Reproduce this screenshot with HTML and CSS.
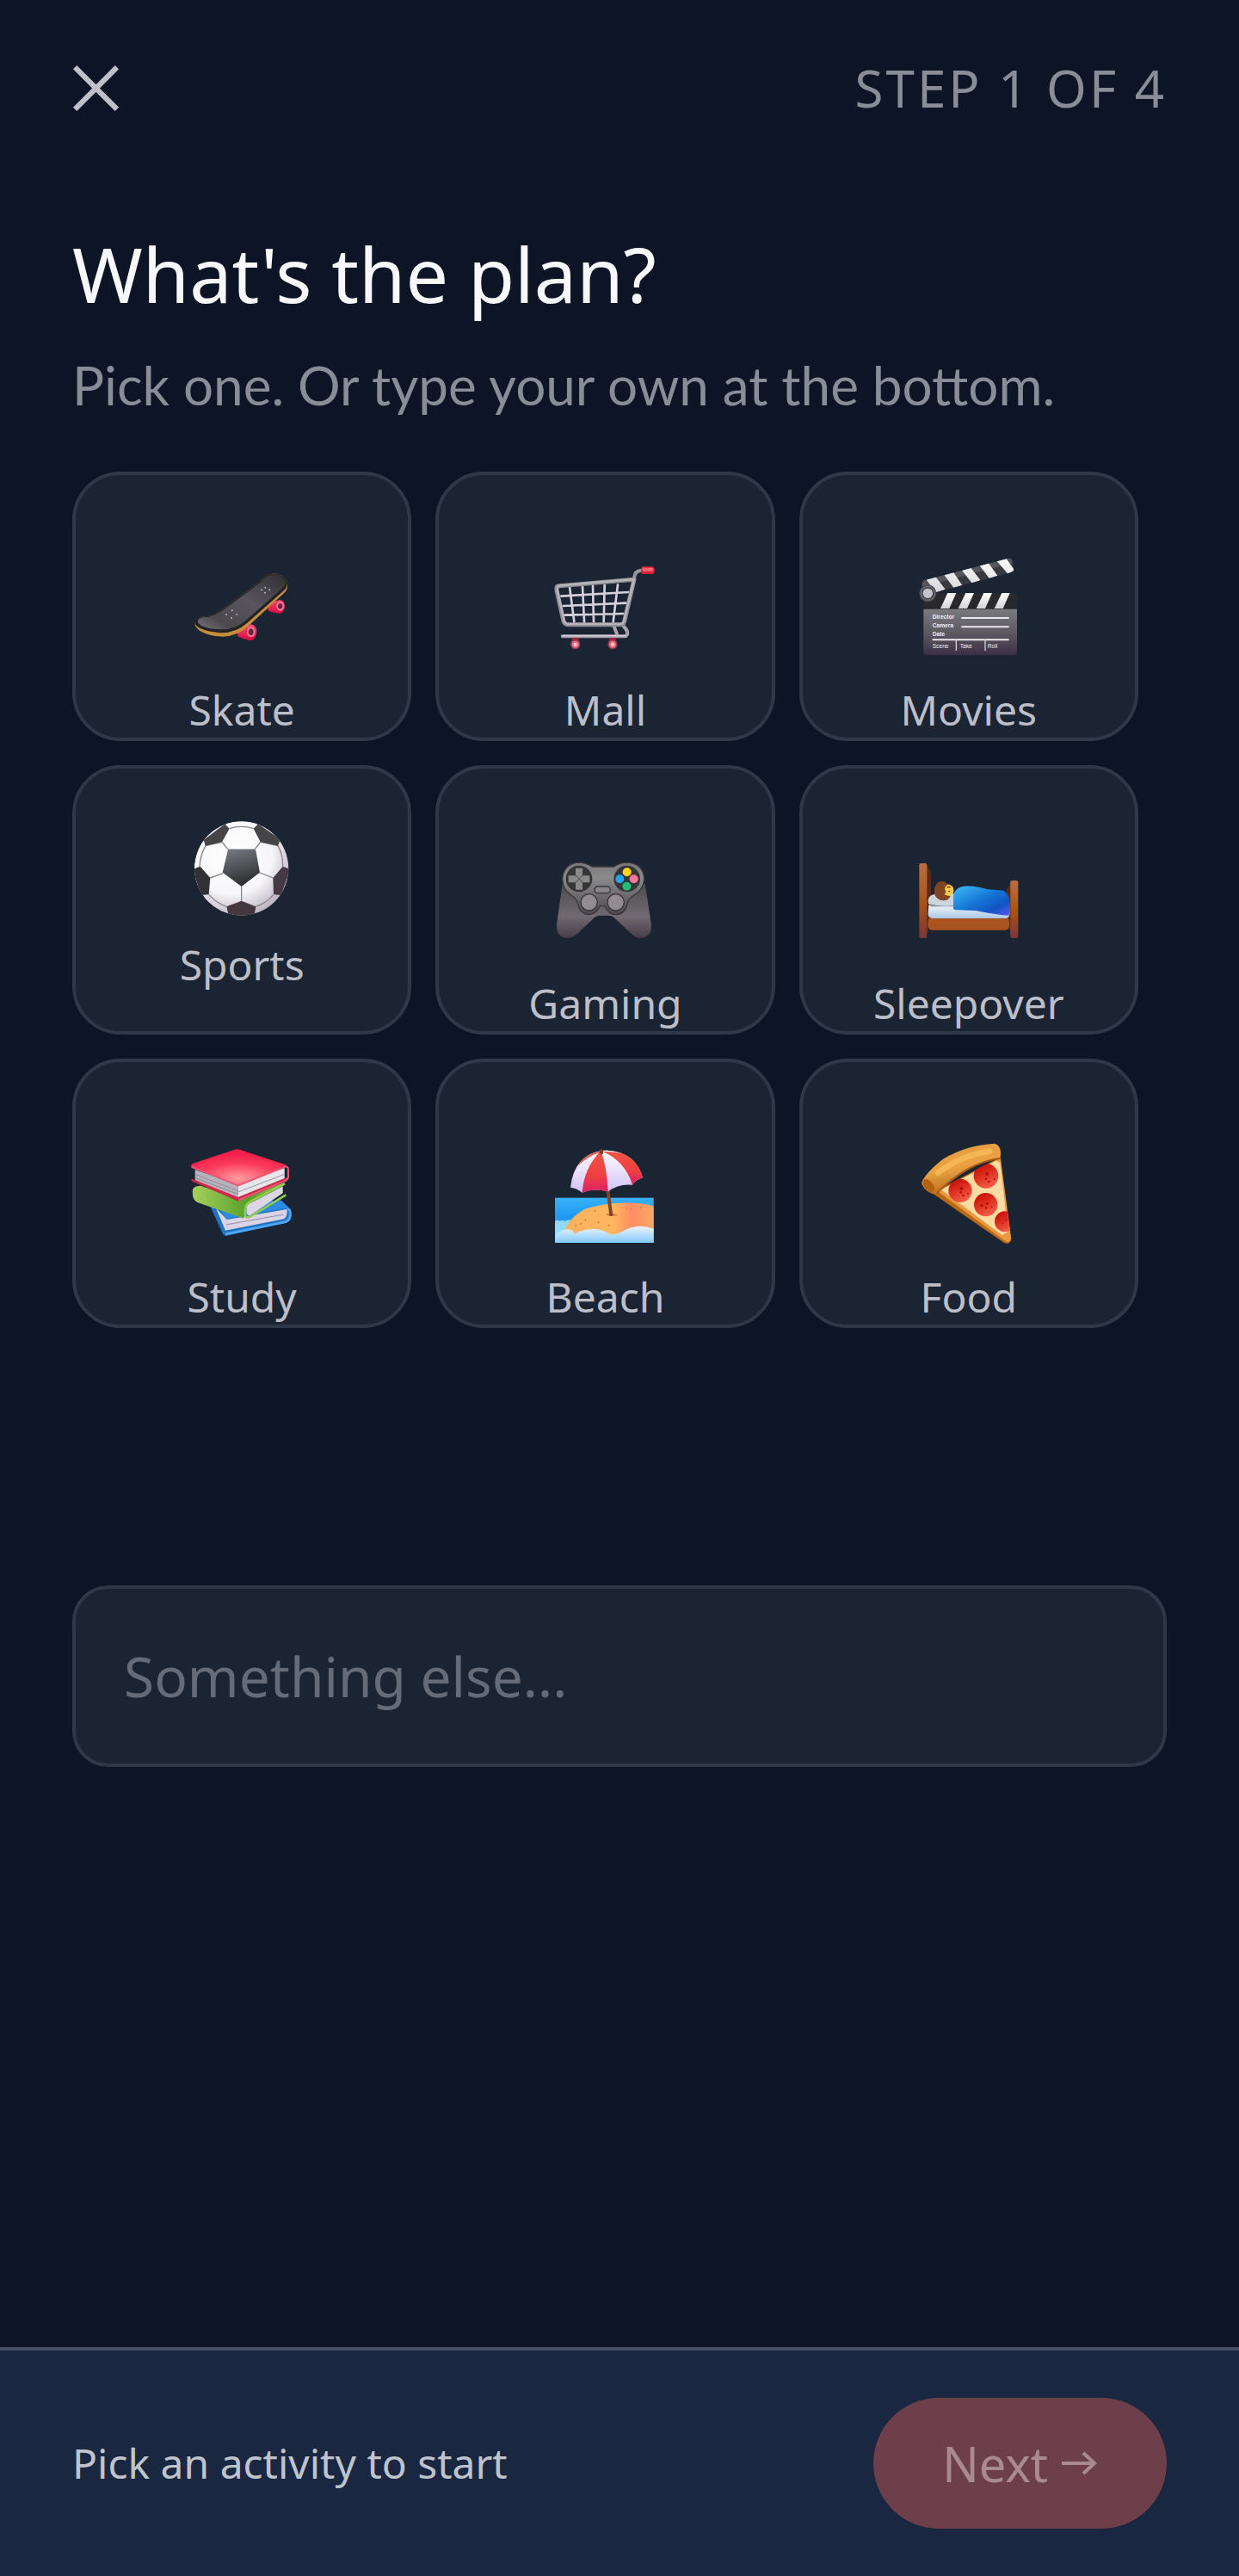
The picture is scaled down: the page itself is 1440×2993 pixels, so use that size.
FILE: index.html
```html
<!DOCTYPE html>
<html lang="en">
<head>
  <meta charset="UTF-8">
  <meta name="viewport" content="width=device-width, initial-scale=1.0">
  <title>What's the plan?</title>
  <link rel="stylesheet" href="styles.css">
</head>
<body>
  <header class="topbar">
    <button class="close-btn" type="button" aria-label="Close">
      <svg class="close-icon" viewBox="0 0 52 52" aria-hidden="true">
        <path d="M3 3L50 50M50 3L3 50" fill="none" stroke="currentColor" stroke-width="6"/>
      </svg>
    </button>
    <span class="step">STEP 1 OF 4</span>
  </header>

  <main class="content">
    <h1 class="title">What's the plan?</h1>
    <p class="subtitle">Pick one. Or type your own at the bottom.</p>

    <div class="activity-grid">
      <button class="activity" type="button">
        <svg class="emoji" viewBox="453 345 360 360" aria-hidden="true">
          <defs>
            <linearGradient id="deck" x1="0" y1="1" x2="1" y2="0">
              <stop offset="0" stop-color="#77757b"/>
              <stop offset=".2" stop-color="#4b494d"/>
              <stop offset=".55" stop-color="#57545f"/>
              <stop offset="1" stop-color="#313033"/>
            </linearGradient>
            <linearGradient id="wheel" x1="0" y1="0" x2="0" y2="1">
              <stop offset="0" stop-color="#f84d72"/>
              <stop offset="1" stop-color="#d40a3c"/>
            </linearGradient>
          </defs>
          <path d="M724 528Q740 504 766 501Q784 504 783 526Q780 548 764 549Q738 546 724 538Z" fill="url(#wheel)"/>
          <path d="M618 618Q640 588 664 586Q686 590 685 614Q680 642 662 643Q636 638 618 627Z" fill="url(#wheel)"/>
          <ellipse cx="767" cy="523" rx="13" ry="16" fill="#ff8095"/>
          <ellipse cx="767" cy="523" rx="8" ry="10" fill="#6a2740"/>
          <ellipse cx="665" cy="613" rx="14" ry="18" fill="#ff8095"/>
          <ellipse cx="665" cy="613" rx="9" ry="12" fill="#6a2740"/>
          <path d="M470 580Q475 560 510 558Q532 558 568 532L700 434Q716 412 744 409Q776 409 790 434Q798 462 780 478L660 588Q620 628 566 629Q488 624 470 590Z" fill="#c78e38"/>
          <path d="M470 578Q475 560 510 558Q532 558 568 532L700 434Q716 412 744 409Q776 409 790 434Q797 454 776 472L654 580Q614 616 562 616Q486 610 470 586Z" fill="#232326"/>
          <path d="M480 573Q484 562 512 561Q534 560 572 534L702 438Q718 416 744 412Q770 411 784 434Q789 450 770 464L648 572Q612 604 562 604Q494 602 480 580Z" fill="url(#deck)"/>
          <g fill="#b8b6ba">
            <circle cx="715" cy="458" r="3"/><circle cx="702" cy="466" r="3"/><circle cx="729" cy="466" r="3"/><circle cx="714" cy="476" r="3"/>
            <circle cx="599" cy="538" r="3"/><circle cx="579" cy="552" r="3"/><circle cx="616" cy="551" r="3"/><circle cx="597" cy="564" r="3"/>
          </g>
        </svg>
        <span class="activity-label">Skate</span>
      </button>

      <button class="activity" type="button">
        <svg class="emoji" viewBox="460 345 360 360" aria-hidden="true">
          <defs>
            <linearGradient id="frame" x1="0" y1="0" x2="0" y2="1">
              <stop offset="0" stop-color="#b4b5ba"/>
              <stop offset="1" stop-color="#b9b1bf"/>
            </linearGradient>
          </defs>
          <g fill="none" stroke-linecap="round" stroke-linejoin="round">
            <path d="M672 594L682 620M706 594Q728 616 712 628L492 628" stroke="#aaa4b2" stroke-width="12"/>
            <path d="M494 626L712 626" stroke="#d9d2df" stroke-width="4"/>
            <path d="M517 456L533 578M562 454L568 578M598 452L601 578M639 450L636 578M685 448L669 578M488 488L722 474M494 522L714 512M500 554L704 549" stroke="#d5d1dc" stroke-width="8"/>
            <path d="M742 426Q744 398 768 398" stroke="#96999e" stroke-width="12"/>
            <path d="M476 453Q470 454 472 468L496 576Q500 587 510 587L696 587Q706 586 708 576L742 430Z" stroke="#8d8d94" stroke-width="15"/>
            <path d="M480 451L742 429L706 576Q704 584 696 585L510 585Q502 584 498 574L474 466Q474 454 480 451Z" stroke="url(#frame)" stroke-width="8"/>
          </g>
          <rect x="766" y="385" width="47" height="26" rx="10" fill="#d92338"/>
          <rect x="770" y="389" width="39" height="12" rx="6" fill="#ff6473"/>
          <path d="M526 634h22l4 20h-30ZM656 634h22l4 20h-30Z" fill="#a81c33"/>
          <circle cx="537" cy="656" r="17" fill="#943d50"/><circle cx="537" cy="656" r="12" fill="#f36d85"/><circle cx="537" cy="656" r="6" fill="#ffd0d4"/>
          <circle cx="667" cy="656" r="17" fill="#943d50"/><circle cx="667" cy="656" r="12" fill="#f36d85"/><circle cx="667" cy="656" r="6" fill="#ffd0d4"/>
        </svg>
        <span class="activity-label">Mall</span>
      </button>

      <button class="activity" type="button">
        <svg class="emoji" viewBox="468 345 360 360" aria-hidden="true">
          <defs>
            <linearGradient id="slate" x1="0" y1="0" x2="0" y2="1">
              <stop offset="0" stop-color="#7a7a7e"/>
              <stop offset=".5" stop-color="#5d5a62"/>
              <stop offset="1" stop-color="#3c2f45"/>
            </linearGradient>
            <linearGradient id="stripe" x1="0" y1="0" x2="0" y2="1">
              <stop offset="0" stop-color="#fff"/>
              <stop offset="1" stop-color="#d4d3d8"/>
            </linearGradient>
            <clipPath id="arm"><path d="M496 432L786 356Q796 354 799 364L804 392Q805 402 796 405L520 478L484 450Q483 436 496 432Z"/></clipPath>
          </defs>
          <g clip-path="url(#arm)">
            <path d="M470 350h350v140H470Z" fill="#38383e"/>
            <path d="M470 438L800 352L803 372L478 458Z" fill="#55555e"/>
            <path d="M500 430L532 420L566 464L532 476ZM562 414L594 404L625 450L596 460ZM624 398L654 388L688 432L660 444ZM686 382L716 372L748 416L720 427ZM746 366L778 356L808 398L784 410Z" fill="url(#stripe)"/>
          </g>
          <path d="M490 478h316q10 0 10 10v46H490Z" fill="#28282d"/>
          <path d="M574 477h30l-24 54h-31ZM637 477h29l-24 54h-31ZM700 477h29l-24 54h-31ZM763 477h28l-24 54h-30Z" fill="url(#stripe)"/>
          <path d="M490 533h326v148q0 13-12 13H502q-12 0-12-13Z" fill="url(#slate)"/>
          <path d="M622 564h166M622 595h166M521 640h267" stroke="#e9e8ec" stroke-width="6"/>
          <path d="M604 640v38M705 640v38" stroke="#d2ced8" stroke-width="4"/>
          <g class="slate-text" fill="#efeef2">
            <text x="521" y="566" font-weight="bold">Director</text>
            <text x="521" y="596" font-weight="bold">Camera</text>
            <text x="521" y="626" font-weight="bold">Date</text>
            <text x="521" y="668">Scene</text>
            <text x="617" y="668">Take</text>
            <text x="713" y="668">Roll</text>
          </g>
          <circle cx="505" cy="478" r="30" fill="#4b4b51"/>
          <circle cx="505" cy="478" r="24" fill="none" stroke="#77777d" stroke-width="3"/>
          <circle cx="505" cy="478" r="17" fill="#c4c4ca"/>
        </svg>
        <span class="activity-label">Movies</span>
      </button>

      <button class="activity activity-compact" type="button">
        <svg class="emoji" viewBox="453 237 360 360" aria-hidden="true">
          <defs>
            <radialGradient id="ball" cx=".4" cy=".35" r=".7">
              <stop offset="0" stop-color="#fff"/>
              <stop offset=".6" stop-color="#f7f7f9"/>
              <stop offset="1" stop-color="#b7adbd"/>
            </radialGradient>
            <linearGradient id="patch" x1=".2" y1="0" x2=".5" y2="1">
              <stop offset="0" stop-color="#747980"/>
              <stop offset="1" stop-color="#2b2b2d"/>
            </linearGradient>
            <clipPath id="ball-clip"><circle cx="632" cy="417" r="164"/></clipPath>
          </defs>
          <g clip-path="url(#ball-clip)">
            <circle cx="632" cy="417" r="165" fill="url(#ball)"/>
            <g fill="none" stroke="#88868c" stroke-width="4">
              <path d="M586 352L564 325L507 338Q488 370 486 410M586 352L677 352L698 325L759 338Q777 370 776 410M567 434L523 450M695 432L742 450M632 480V530M590 278Q630 264 674 278M518 508Q544 538 580 550M744 508Q720 538 682 550"/>
            </g>
            <path d="M590 350h86q5 0 6 5l14 76-64 49-66-49 18-76q1-5 6-5Z" fill="url(#patch)"/>
            <path d="M506 338Q503 326 500 318L574 262L590 278L564 325ZM674 278L690 262L768 316L759 338L698 325Z" fill="#454548"/>
            <path d="M462 420L488 410L523 450L518 508L490 510Z" fill="#323235"/>
            <path d="M776 410L802 420L770 510L744 508L742 450Z" fill="#453945"/>
            <path d="M580 550L632 530L682 550L676 585H588Z" fill="#45373f"/>
          </g>
        </svg>
        <span class="activity-label">Sports</span>
      </button>

      <button class="activity" type="button">
        <svg class="emoji" viewBox="460 348 360 360" aria-hidden="true">
          <defs>
            <linearGradient id="pad" x1="0" y1="0" x2="0" y2="1">
              <stop offset="0" stop-color="#79797b"/>
              <stop offset=".3" stop-color="#8a8a8b"/>
              <stop offset="1" stop-color="#4e494e"/>
            </linearGradient>
            <linearGradient id="grip" x1="0" y1="0" x2="0" y2="1">
              <stop offset="0" stop-color="#4d4b4f"/>
              <stop offset=".6" stop-color="#716a72"/>
              <stop offset="1" stop-color="#453c48"/>
            </linearGradient>
          </defs>
          <path d="M492 470L472 614Q470 654 506 660Q528 660 544 644L604 588Q612 581 624 581H652Q664 581 672 588L732 644Q746 660 768 660Q804 652 802 614L780 470Z" fill="url(#grip)"/>
          <path d="M548 396Q574 396 596 411H672Q692 396 718 396Q776 400 777 456Q774 492 742 510Q722 522 718 540Q710 577 678 578Q652 577 640 548H622Q610 576 586 578Q552 576 546 540Q542 522 522 510Q492 490 492 454Q496 400 548 396Z" fill="url(#pad)" stroke="#38353a" stroke-width="4"/>
          <circle cx="550" cy="453" r="46" fill="#353537"/>
          <circle cx="717" cy="453" r="46" fill="#353537"/>
          <path d="M538 416h24v24l-12 13-12-13ZM538 491h24v-24l-12-12-12 12ZM513 442h24l12 12-12 12h-24ZM587 442h-24l-12 12 12 12h24Z" fill="#898989"/>
          <circle cx="717" cy="430" r="15" fill="#ffd41c"/>
          <circle cx="692" cy="454" r="15" fill="#25a3ea"/>
          <circle cx="741" cy="454" r="15" fill="#f9759a"/>
          <circle cx="716" cy="479" r="15" fill="#22bd78"/>
          <rect x="604" y="480" width="55" height="23" rx="11" fill="#858486" stroke="#373639" stroke-width="4"/>
          <circle cx="585" cy="535" r="29" fill="#928c92" stroke="#373338" stroke-width="4"/>
          <circle cx="678" cy="535" r="29" fill="#928c92" stroke="#373338" stroke-width="4"/>
        </svg>
        <span class="activity-label">Gaming</span>
      </button>

      <button class="activity" type="button">
        <svg class="emoji" viewBox="468 348 360 360" aria-hidden="true">
          <defs>
            <linearGradient id="post" x1="0" y1="0" x2="0" y2="1">
              <stop offset="0" stop-color="#b96e41"/>
              <stop offset=".55" stop-color="#a95218"/>
              <stop offset="1" stop-color="#7b3438"/>
            </linearGradient>
            <linearGradient id="blanket" x1="0" y1="0" x2="1" y2="1">
              <stop offset="0" stop-color="#3fbbf7"/>
              <stop offset=".45" stop-color="#1679d8"/>
              <stop offset=".75" stop-color="#1054c4"/>
              <stop offset="1" stop-color="#5a58ed"/>
            </linearGradient>
            <linearGradient id="sheet" x1="0" y1="0" x2="0" y2="1">
              <stop offset="0" stop-color="#f0f3f6"/>
              <stop offset="1" stop-color="#a9c8e8"/>
            </linearGradient>
          </defs>
          <path d="M500 402L516 430V590L500 655ZM796 462L780 490V590L796 655Z" fill="#5a2c16"/>
          <rect x="506" y="588" width="283" height="44" rx="14" fill="#a9541f"/>
          <path d="M508 546H790V580Q788 591 776 591H520Q506 590 506 576Z" fill="url(#sheet)"/>
          <path d="M506 528Q508 508 532 506L600 505V548H520Q506 548 506 528Z" fill="#ccd5dc"/>
          <path d="M508 540Q552 552 600 546V550H516Z" fill="#7890a0"/>
          <path d="M560 474Q588 468 594 486Q600 506 578 516L560 510Z" fill="#fcca4e"/>
          <path d="M572 484q7-5 12 0M576 496q4 2 6 0" fill="none" stroke="#7a4318" stroke-width="4"/>
          <path d="M532 478Q538 462 554 462Q568 462 574 474Q562 480 565 492Q572 500 562 508Q574 512 584 514Q578 530 558 529Q536 527 528 506Q526 488 532 478Z" fill="#814523"/>
          <path d="M594 558V512Q598 484 630 479Q670 476 714 490L770 494Q790 508 792 540L788 581L760 579Q710 572 670 564L606 562Q596 562 594 558Z" fill="url(#blanket)"/>
          <rect x="475" y="399" width="27" height="261" rx="7" fill="url(#post)"/>
          <rect x="793" y="459" width="27" height="201" rx="7" fill="url(#post)"/>
        </svg>
        <span class="activity-label">Sleepover</span>
      </button>

      <button class="activity" type="button">
        <svg class="emoji" viewBox="453 348 360 360" aria-hidden="true">
          <defs>
            <radialGradient id="red-cover" cx=".5" cy=".8" r=".7">
              <stop offset="0" stop-color="#ff9c9f"/>
              <stop offset=".6" stop-color="#fb3a5e"/>
              <stop offset="1" stop-color="#f51d49"/>
            </radialGradient>
            <linearGradient id="green-cover" x1="0" y1="0" x2="1" y2="0">
              <stop offset="0" stop-color="#a8cf5c"/>
              <stop offset=".6" stop-color="#55a129"/>
              <stop offset="1" stop-color="#8cc548"/>
            </linearGradient>
          </defs>
          <path d="M522 570L770 550L800 580Q810 612 792 628L576 675L568 670Z" fill="#1e73c4"/>
          <path d="M544 580L576 656L780 616Q794 606 790 582L582 618Z" fill="#dcd3e5"/>
          <path d="M578 636L780 600" stroke="#968fa8" stroke-width="3"/>
          <path d="M522 572L770 552L796 576L578 616L560 582Z" fill="#2c8be2"/>
          <path d="M576 669L786 626Q804 618 802 594Q800 580 790 582" fill="none" stroke="#4fa6f3" stroke-width="9"/>
          <path d="M462 512Q468 500 490 500L620 545L780 490L786 496L654 564Q640 574 640 614L478 558Q458 548 462 512Z" fill="url(#green-cover)"/>
          <path d="M650 574Q652 564 664 560L776 502V526L664 602Q650 606 650 592Z" fill="#ded6e4"/>
          <path d="M782 492L662 556Q645 564 645 586V604Q650 614 662 608L787 532" fill="none" stroke="#93cc51" stroke-width="8"/>
          <path d="M456 476L620 530L790 470V485L620 554L458 484Z" fill="#cf2848"/>
          <path d="M470 444L620 496V540L470 480Z" fill="#b7b3bd"/>
          <path d="M470 460L620 518M470 472L620 530" stroke="#8d8895" stroke-width="3"/>
          <path d="M620 496L782 438V474L620 540Z" fill="#e8e5eb"/>
          <path d="M620 522L782 460" stroke="#9c97a5" stroke-width="3"/>
          <path d="M456 430Q456 424 464 422L604 376Q616 370 630 376L790 428L622 500L620 500L458 438Z" fill="url(#red-cover)"/>
          <path d="M458 434L620 499L784 434Q796 432 795 446V470Q794 480 780 484L622 550" fill="none" stroke="#ee5874" stroke-width="6"/>
        </svg>
        <span class="activity-label">Study</span>
      </button>

      <button class="activity" type="button">
        <svg class="emoji" viewBox="460 348 360 360" aria-hidden="true">
          <defs>
            <linearGradient id="sea" x1="0" y1="0" x2="0" y2="1">
              <stop offset="0" stop-color="#38b1fa"/>
              <stop offset=".45" stop-color="#1d98f0"/>
              <stop offset="1" stop-color="#7fd0fb"/>
            </linearGradient>
            <linearGradient id="sand" x1="0" y1="0" x2="1" y2="0">
              <stop offset="0" stop-color="#fbb05d"/>
              <stop offset=".55" stop-color="#ffb660"/>
              <stop offset=".75" stop-color="#ff8e63"/>
              <stop offset="1" stop-color="#fda865"/>
            </linearGradient>
            <linearGradient id="foam" x1="0" y1="0" x2="0" y2="1">
              <stop offset="0" stop-color="#eef5fd"/>
              <stop offset="1" stop-color="#82cafb"/>
            </linearGradient>
            <linearGradient id="canopy-red" x1="0" y1="0" x2="0" y2="1">
              <stop offset="0" stop-color="#f25545"/>
              <stop offset=".6" stop-color="#f03e40"/>
              <stop offset="1" stop-color="#da1f6a"/>
            </linearGradient>
            <linearGradient id="canopy-white" x1="0" y1="0" x2="0" y2="1">
              <stop offset="0" stop-color="#fff"/>
              <stop offset="1" stop-color="#d2c0f5"/>
            </linearGradient>
          </defs>
          <rect x="466" y="542" width="344" height="157" fill="url(#sea)"/>
          <path d="M466 624q10-8 16 0q12-6 18 0q10-6 20-4v50h-54Z" fill="#8edcfd"/>
          <path d="M498 660Q516 610 574 580Q650 556 740 560Q786 562 810 572V660L670 680H530Z" fill="url(#sand)"/>
          <path d="M642 600q20-8 42 2q-22 8-42-2Z" fill="#d1753d"/>
          <g fill="#cc7f3c">
            <circle cx="572" cy="620" r="3"/><circle cx="556" cy="632" r="3"/><circle cx="618" cy="628" r="3"/><circle cx="605" cy="588" r="3"/>
            <circle cx="716" cy="580" r="3"/><circle cx="730" cy="581" r="3"/><circle cx="766" cy="576" r="3"/><circle cx="538" cy="640" r="3"/><circle cx="654" cy="638" r="3"/>
          </g>
          <path d="M466 672Q490 650 516 652Q530 656 534 668Q570 648 614 652Q638 656 656 668Q676 674 700 660Q752 628 810 650V699H466Z" fill="url(#foam)"/>
          <path d="M644 515L656 515L668 604Q662 608 656 604Z" fill="#7d4325"/>
          <path d="M626 378Q532 396 520 506Q542 508 561 524Q600 508 651 520Q688 492 736 497Q746 480 772 472Q748 384 650 377Z" fill="url(#canopy-white)"/>
          <path d="M626 378Q566 440 561 524Q600 508 651 520Q648 440 626 378Z" fill="url(#canopy-red)"/>
          <path d="M630 380Q710 412 736 497Q746 480 772 472Q756 406 690 384Q656 376 630 380Z" fill="url(#canopy-red)"/>
          <path d="M624 380Q572 386 540 436Q580 396 624 384Z" fill="#ee5a50"/>
          <path d="M636 381Q680 380 710 392Q670 376 636 377Z" fill="#fff"/>
          <rect x="621" y="373" width="13" height="18" rx="5" fill="#7d4325"/>
        </svg>
        <span class="activity-label">Beach</span>
      </button>

      <button class="activity" type="button">
        <svg class="emoji" viewBox="468 348 360 360" aria-hidden="true">
          <defs>
            <linearGradient id="crust" x1="0" y1="0" x2=".35" y2="1">
              <stop offset="0" stop-color="#e09a3e"/>
              <stop offset=".55" stop-color="#eba243"/>
              <stop offset="1" stop-color="#b5681a"/>
            </linearGradient>
            <linearGradient id="pepperoni" x1=".2" y1="0" x2=".7" y2="1">
              <stop offset="0" stop-color="#c40a04"/>
              <stop offset=".4" stop-color="#db2a1c"/>
              <stop offset="1" stop-color="#f7624c"/>
            </linearGradient>
            <clipPath id="slice"><path d="M546 512L740 408H756L794 670L790 698L770 694L530 530Z"/></clipPath>
          </defs>
          <path d="M520 526L758 400L796 684Q794 706 772 700Z" fill="#bb6714"/>
          <path d="M540 520L758 404L795 684Q790 700 776 694Z" fill="#ea9a3e"/>
          <path d="M552 514L744 412L757 420L785 660L764 672Z" fill="#fddca4"/>
          <g clip-path="url(#slice)">
            <circle cx="708" cy="466" r="43" fill="url(#pepperoni)"/>
            <circle cx="618" cy="517" r="41" fill="url(#pepperoni)"/>
            <circle cx="707" cy="566" r="41" fill="url(#pepperoni)"/>
            <circle cx="774" cy="625" r="36" fill="url(#pepperoni)"/>
            <g fill="#b01310">
              <circle cx="711" cy="459" r="6"/><circle cx="708" cy="476" r="4"/><circle cx="718" cy="486" r="4"/><circle cx="737" cy="477" r="3"/>
              <circle cx="622" cy="510" r="6"/><circle cx="620" cy="523" r="4"/><circle cx="628" cy="534" r="4"/><circle cx="645" cy="527" r="3"/>
              <circle cx="712" cy="562" r="5"/><circle cx="693" cy="569" r="5"/><circle cx="708" cy="577" r="4"/><circle cx="728" cy="574" r="3"/>
              <circle cx="776" cy="620" r="3"/><circle cx="766" cy="630" r="3"/>
            </g>
          </g>
          <path d="M484 488Q500 452 560 406Q640 358 738 353Q758 358 759 384L758 404Q740 410 712 414Q632 440 534 529Q500 528 484 494Z" fill="url(#crust)"/>
          <path d="M758 404Q640 420 536 526" fill="none" stroke="#a55a14" stroke-width="6"/>
          <path d="M540 456Q620 394 720 380" fill="none" stroke="#ffc862" stroke-width="20" stroke-linecap="round" opacity=".55"/>
          <ellipse cx="508" cy="500" rx="16" ry="26" transform="rotate(-38 508 500)" fill="#b5620f"/>
        </svg>
        <span class="activity-label">Food</span>
      </button>
    </div>

    <input class="custom-input" type="text" placeholder="Something else..." aria-label="Something else">
  </main>

  <footer class="bottom-bar">
    <span class="hint">Pick an activity to start</span>
    <button class="next-btn" type="button" disabled>
      Next
      <svg class="arrow" viewBox="0 0 42 28" aria-hidden="true">
        <path d="M0 14H38M25 2L38 14L25 26" fill="none" stroke="currentColor" stroke-width="4"/>
      </svg>
    </button>
  </footer>
</body>
</html>
```

FILE: styles.css
```css
* {
  box-sizing: border-box;
}

body {
  display: flex;
  flex-direction: column;
  min-height: 100vh;
  margin: 0;
  background-color: #0c1425;
  color: #f7f8fa;
  font-family: "Noto Sans", "Open Sans", sans-serif;
}

button,
input {
  font-family: inherit;
}

.topbar {
  display: flex;
  align-items: center;
  justify-content: space-between;
  padding: 66px 84px 0;
}

.close-btn {
  display: flex;
  align-items: center;
  height: 72px;
  padding: 0;
  border: none;
  background: none;
  color: #bdc0c6;
}

.close-icon {
  width: 54px;
  height: 54px;
}

.step {
  color: #888d98;
  font-size: 60px;
  line-height: 72px;
  letter-spacing: 3px;
}

.content {
  flex: 1;
  display: flex;
  flex-direction: column;
  padding: 124px 84px 0;
}

.title {
  margin: 0;
  font-size: 88px;
  font-weight: 400;
  line-height: 112px;
}

.subtitle {
  margin: 33px 0 0;
  color: #888d97;
  font-family: Lato, "Noto Sans", sans-serif;
  font-size: 62px;
  line-height: 80px;
}

.activity-grid {
  display: grid;
  grid-template-columns: repeat(3, 31%);
  gap: 28px;
  margin-top: 61px;
}

.activity {
  display: flex;
  flex-direction: column;
  align-items: center;
  justify-content: flex-start;
  gap: 28px;
  padding: 93px 0 0;
  border: 4px solid #303848;
  border-radius: 56px;
  background-color: #1b2433;
  color: #bdbfc8;
}

.activity-compact {
  gap: 20px;
  padding-top: 56px;
}

.emoji {
  width: 120px;
  height: 120px;
}

.slate-text {
  font-family: "Liberation Sans", sans-serif;
  font-size: 20px;
}

.activity-label {
  font-size: 48px;
  line-height: 64px;
}

.custom-input {
  width: 100%;
  height: 211px;
  margin-top: 299px;
  padding: 0 56px;
  border: 4px solid #303848;
  border-radius: 42px;
  background-color: #1b2433;
  color: #f7f8fa;
  font-size: 64px;
}

.custom-input::placeholder {
  color: #656b77;
  opacity: 1;
}

.bottom-bar {
  display: flex;
  align-items: center;
  justify-content: space-between;
  padding: 55px 84px;
  border-top: 4px solid #465064;
  background-color: #1a2741;
}

.hint {
  color: #bfc4cc;
  font-size: 48px;
  line-height: 64px;
}

.next-btn {
  display: flex;
  align-items: center;
  gap: 16px;
  height: 152px;
  padding: 0 80px;
  border: none;
  border-radius: 76px;
  background-color: #6d3f4a;
  color: #a98a91;
  font-size: 56px;
}

.arrow {
  width: 42px;
  height: 28px;
}
```
